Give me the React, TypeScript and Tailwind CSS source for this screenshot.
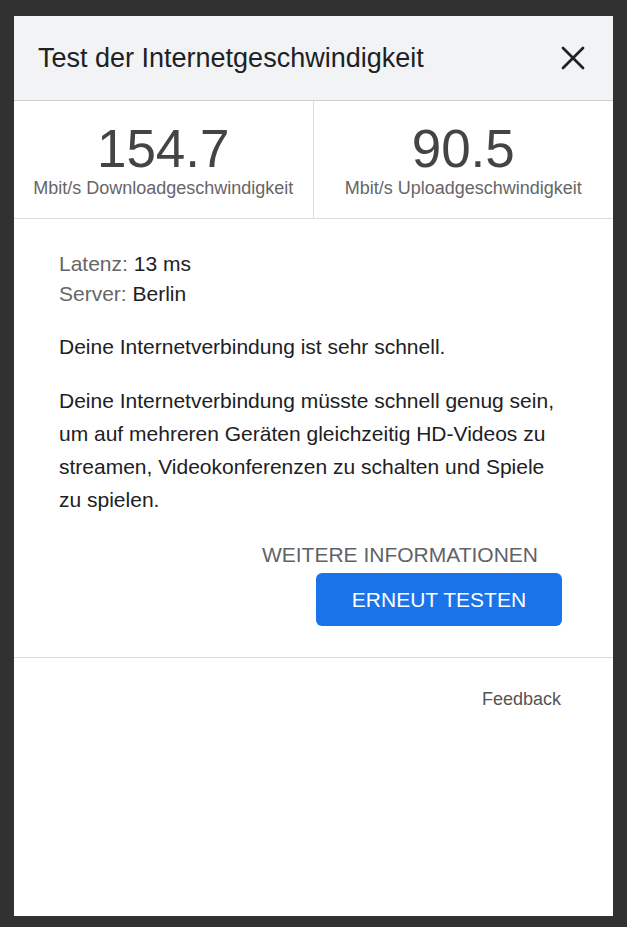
import { X } from 'lucide-react'

export default function App() {
  return (
    <div className="min-h-[927px] bg-[#313131] pt-4 pl-[14px]" style={{ fontFamily: '"Liberation Sans", Arial, sans-serif' }}>
      <div className="w-[599px] h-[900px] bg-white flex flex-col">
        {/* header */}
        <div className="h-[85px] bg-[#f1f3f4] border-b border-[#cfcfcf] flex items-center justify-between pl-6 pr-5">
          <h1 className="text-[27px] text-[#202124] leading-none">Test der Internetgeschwindigkeit</h1>
          <X size={40} strokeWidth={1.6} className="text-[#202124]" />
        </div>

        {/* stats */}
        <div className="grid grid-cols-2 h-[118px] border-b border-[#dadce0]">
          <div className="flex flex-col items-center justify-center border-r border-[#dadce0]">
            <div className="text-[53px] leading-[56px] text-[#444]">154.7</div>
            <div className="text-[18px] leading-[22px] text-[#666]">Mbit/s Downloadgeschwindigkeit</div>
          </div>
          <div className="flex flex-col items-center justify-center">
            <div className="text-[53px] leading-[56px] text-[#444]">90.5</div>
            <div className="text-[18px] leading-[22px] text-[#666]">Mbit/s Uploadgeschwindigkeit</div>
          </div>
        </div>

        {/* details */}
        <div className="pl-[45px] pr-[51px] pt-[30px] text-[21px] text-[#202124]">
          <div className="leading-[30px]">
            <div><span className="text-[#666]">Latenz:</span> 13 ms</div>
            <div><span className="text-[#666]">Server:</span> Berlin</div>
          </div>
          <p className="mt-[21px] leading-[33px]">Deine Internetverbindung ist sehr schnell.</p>
          <p className="mt-[21px] leading-[33px]">
            Deine Internetverbindung müsste schnell genug sein, um auf mehreren Geräten gleichzeitig HD-Videos zu streamen, Videokonferenzen zu schalten und Spiele zu spielen.
          </p>
          <div className="flex flex-col items-end mt-[27px]">
            <div className="leading-6 text-[#5f6368] pr-6">WEITERE INFORMATIONEN</div>
            <button className="mt-[6px] w-[246px] h-[53px] rounded-md bg-[#1a73e8] text-white text-[21px]">ERNEUT TESTEN</button>
          </div>
        </div>

        <div className="mt-[31px] border-t border-[#dadce0]" />
        <div className="flex justify-end pr-[52px] pt-[30px] text-[18px] leading-[22px] text-[#555]">Feedback</div>
      </div>
    </div>
  )
}
